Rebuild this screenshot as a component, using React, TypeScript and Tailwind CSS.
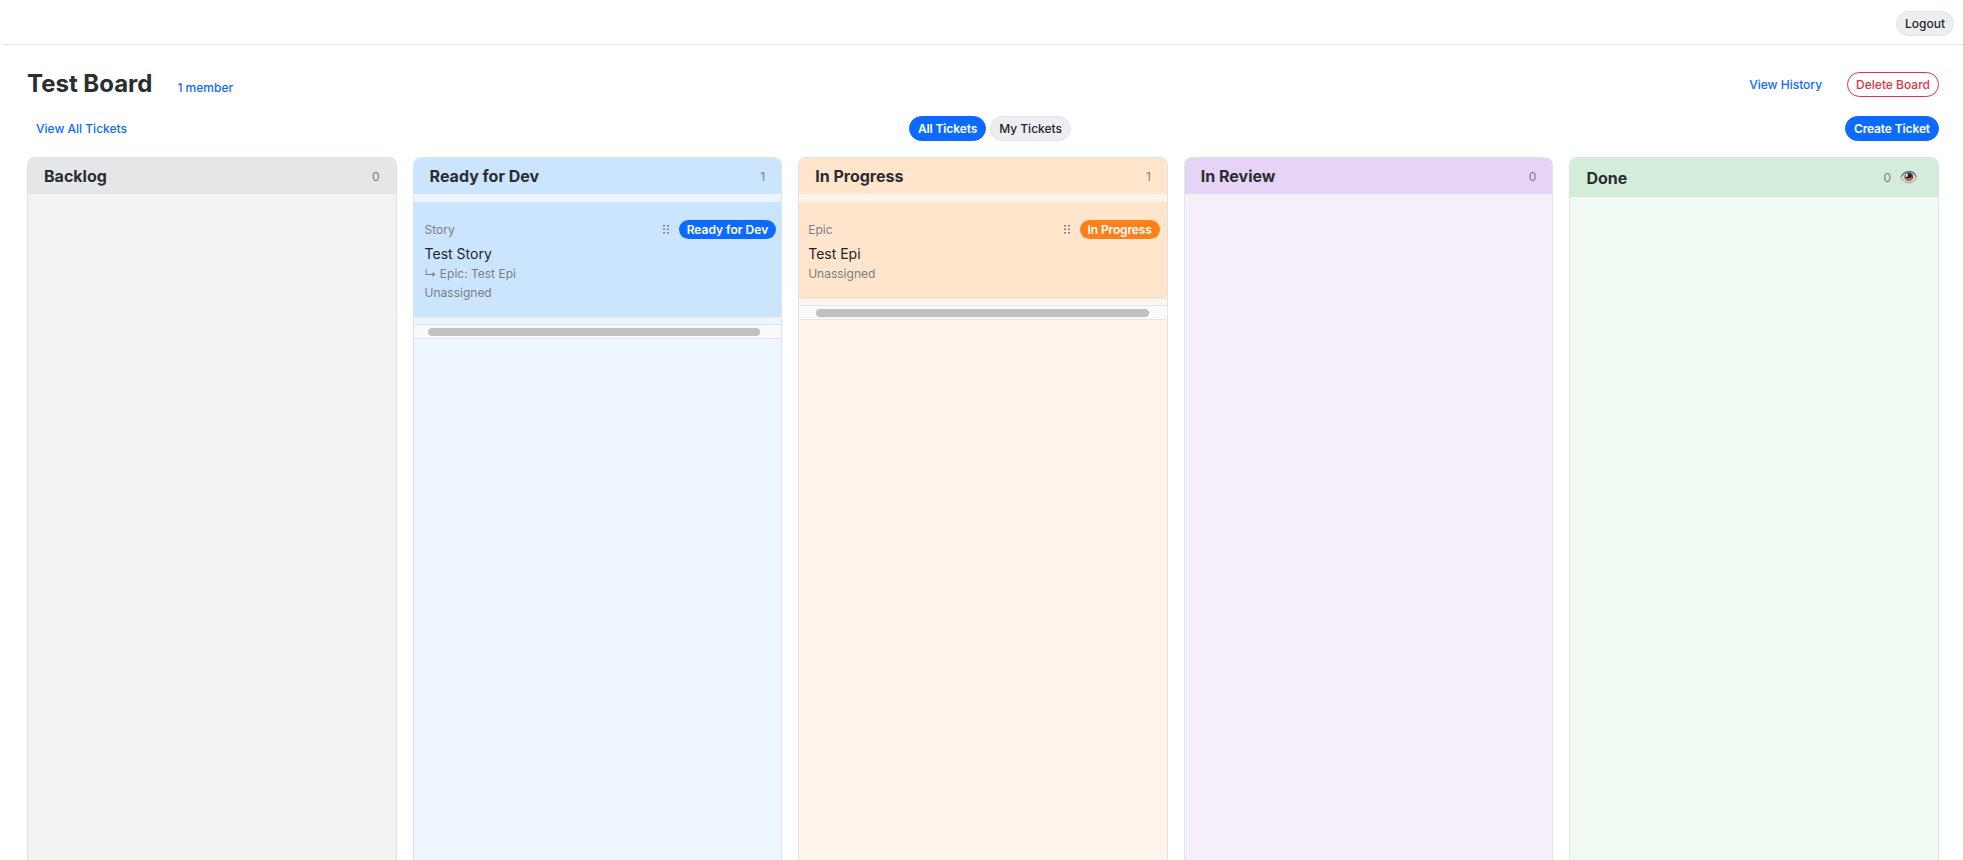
import clsx from 'clsx'

type Ticket = {
  id: number
  type: string
  title: string
  epic?: string
  assignee: string
}

type Column = {
  id: string
  title: string
  tickets: Ticket[]
  collapsible?: boolean
  headerClass: string
  bodyClass: string
  badgeClass: string
  cardClass: string
  scrollClass: string
}

const columns: Column[] = [
  {
    id: 'backlog',
    title: 'Backlog',
    tickets: [],
    headerClass: 'bg-[#e5e6e7]',
    bodyClass: 'bg-[#f3f3f3]',
    badgeClass: '',
    cardClass: '',
    scrollClass: '',
  },
  {
    id: 'ready',
    title: 'Ready for Dev',
    tickets: [{ id: 2, type: 'Story', title: 'Test Story', epic: 'Test Epi', assignee: 'Unassigned' }],
    headerClass: 'bg-[#cce5ff]',
    bodyClass: 'bg-[#edf5ff]',
    badgeClass: 'bg-[#0d6aff]',
    cardClass: 'bg-[#cce5ff] pl-[11px] pr-[5px]',
    scrollClass: 'ml-3.5 mr-[21px]',
  },
  {
    id: 'progress',
    title: 'In Progress',
    tickets: [{ id: 1, type: 'Epic', title: 'Test Epi', assignee: 'Unassigned' }],
    headerClass: 'bg-[#ffe5cc]',
    bodyClass: 'bg-[#fff5ea]',
    badgeClass: 'bg-[#ff7f1a] tracking-[-0.01em]',
    cardClass: 'bg-[#ffe5cc] pl-[9px] pr-[7px]',
    scrollClass: 'ml-[17px] mr-[18px]',
  },
  {
    id: 'review',
    title: 'In Review',
    tickets: [],
    headerClass: 'bg-[#e5d4f5]',
    bodyClass: 'bg-[#f4effa]',
    badgeClass: '',
    cardClass: '',
    scrollClass: '',
  },
  {
    id: 'done',
    title: 'Done',
    tickets: [],
    collapsible: true,
    headerClass: 'bg-[#d4edda]',
    bodyClass: 'bg-[#f0f9f2]',
    badgeClass: '',
    cardClass: '',
    scrollClass: '',
  },
]

const pill = 'flex h-[25px] items-center rounded-full border px-2 text-xs font-medium'
const pillPrimary =
  'flex h-[25px] items-center rounded-full border border-[#0d6aff] bg-[#0d6aff] px-2 text-xs font-semibold tracking-[-0.01em] text-white'

function EyeIcon() {
  return (
    <svg width="17" height="14" viewBox="0 0 17 14">
      <path d="M.5 7.500C3 3.500 5.500 2 9 2s5.500 1.500 7.500 5c-2 4-4 5.800-7.500 5.800S3 11 .5 7.500Z" fill="#dcdcdc" stroke="#98989a" />
      <path d="M1.500 6.500C3.500 2.500 6 1.500 9 1.500s5.500 1.200 7 5" fill="none" stroke="#77777b" strokeWidth="1.400" />
      <circle cx="8.800" cy="6.800" r="4.300" fill="#3f3a3b" />
      <path d="M5 8.200a4.300 4.300 0 0 0 7.800 0L10.500 7l-2 1.500Z" fill="#f0641e" />
      <circle cx="9" cy="6" r="2.300" fill="#222426" />
      <path d="M6 3.800l2 .2-.5 2.500-2 .8Z" fill="#f0f0f0" />
    </svg>
  )
}

function GripIcon() {
  return (
    <svg width="6" height="9" viewBox="0 0 6 9" fill="#7d8287">
      {[0, 3.5, 7].map((y) => (
        <g key={y}>
          <rect x="0" y={y} width="2" height="1.500" />
          <rect x="4" y={y} width="2" height="1.500" />
        </g>
      ))}
    </svg>
  )
}

function TicketCard({ ticket, column }: { ticket: Ticket; column: Column }) {
  return (
    <div className={clsx('pt-[18px] pb-[14px] text-xs leading-[19px] text-[#7b7f83] shadow-[0_1px_2px_rgba(0,0,0,0.12)]', column.cardClass)}>
      <div className="flex h-[19px] items-center">
        <span>{ticket.type}</span>
        <span className="mr-2.5 ml-auto">
          <GripIcon />
        </span>
        <span className={clsx('h-[19px] rounded-full px-2 font-semibold text-white', column.badgeClass)}>{column.title}</span>
      </div>
      <div className="mt-[5px] text-sm leading-5 text-[#212529]">{ticket.title}</div>
      {ticket.epic && <div>↳ Epic: {ticket.epic}</div>}
      <div>{ticket.assignee}</div>
    </div>
  )
}

function BoardColumn({ column }: { column: Column }) {
  return (
    <section className={clsx('min-w-0 flex-1 overflow-hidden rounded-t-lg border border-b-0 border-[#dfe2e6]', column.bodyClass)}>
      <div className={clsx('flex items-center justify-between px-4', column.collapsible ? 'h-[39px]' : 'h-9', column.headerClass)}>
        <h2 className="text-base font-bold text-[#2a2d31]">{column.title}</h2>
        <div className="flex items-center gap-[9px] pt-px text-xs text-[#7b7f83]">
          <span>{column.tickets.length}</span>
          {column.collapsible && (
            <button className="mr-[5px] mb-[3px]">
              <EyeIcon />
            </button>
          )}
        </div>
      </div>
      {column.tickets.length > 0 && (
        <div className="pt-2">
          {column.tickets.map((ticket) => (
            <TicketCard key={ticket.id} ticket={ticket} column={column} />
          ))}
          <div className="mt-2 border-y border-[#e6e6e8] bg-[#fafafa] pt-[3px] pb-0.5">
            <div className={clsx('h-2 rounded-full bg-[#c1c1c1]', column.scrollClass)} />
          </div>
        </div>
      )}
    </section>
  )
}

export default function App() {
  return (
    <div className="flex h-[860px] flex-col overflow-hidden bg-white font-[Inter,sans-serif]">
      <header className="ml-[3px] flex h-[45px] items-start justify-end border-b border-[#e2e3e5] pt-[11px] pr-[9px]">
        <button className={clsx(pill, 'border-[#e2e5e8] bg-[#eceef2] text-[#212529]')}>Logout</button>
      </header>

      <main className="flex flex-1 flex-col pr-6 pl-[27px]">
        <div className="mt-[27px] flex h-[25px] items-center justify-between">
          <div className="flex items-baseline gap-[25px] pb-0.5">
            <h1 className="text-2xl font-bold text-[#2a2d31]">Test Board</h1>
            <a href="#" className="text-xs font-medium text-[#0d6aff]">1 member</a>
          </div>
          <div className="flex items-center gap-[17px]">
            <button className="px-2 text-xs font-medium text-[#0d6aff]">View History</button>
            <button className={clsx(pill, 'border-[#dc3545] text-[#dc3545]')}>Delete Board</button>
          </div>
        </div>

        <div className="mt-[19px] grid h-[25px] grid-cols-3 items-center">
          <a href="#" className="pl-[9px] text-xs font-medium text-[#0d6aff]">View All Tickets</a>
          <div className="flex justify-center gap-1 pl-[14px]">
            <button className={pillPrimary}>All Tickets</button>
            <button className={clsx(pill, 'border-[#e2e5e8] bg-[#eceef2] text-[#212529]')}>My Tickets</button>
          </div>
          <button className={clsx(pillPrimary, 'justify-self-end')}>Create Ticket</button>
        </div>

        <div className="mt-4 flex flex-1 gap-4">
          {columns.map((column) => (
            <BoardColumn key={column.id} column={column} />
          ))}
        </div>
      </main>
    </div>
  )
}
